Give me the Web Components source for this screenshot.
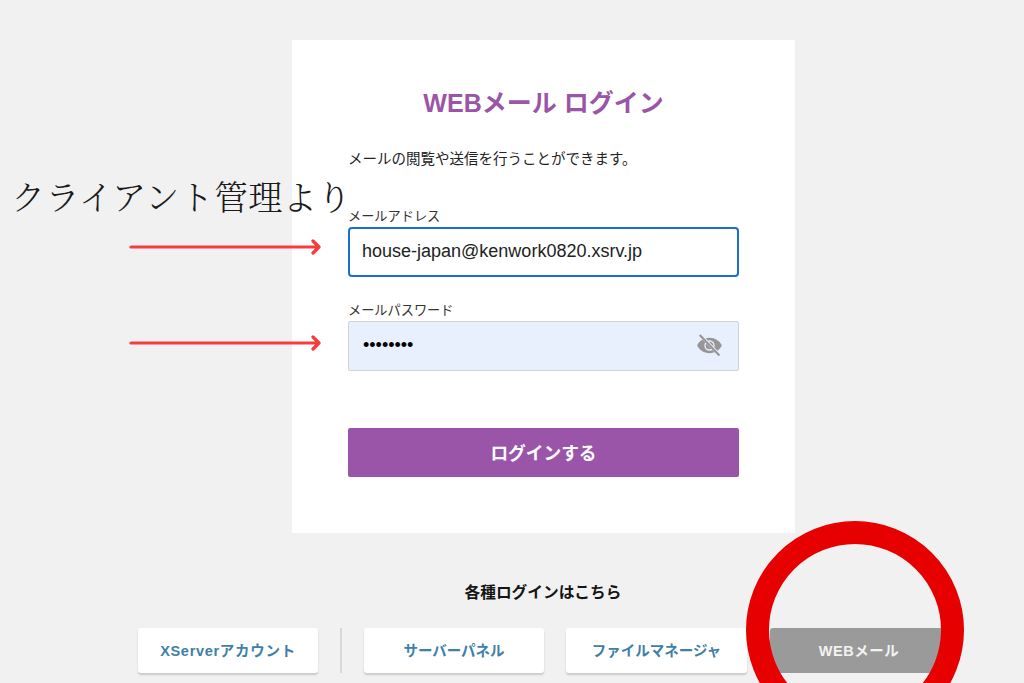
<!DOCTYPE html>
<html lang="ja"><head><meta charset="utf-8"><title>WEBメール ログイン</title>
<style>
html,body{margin:0;padding:0;height:683px;overflow:hidden;background:#f1f1f1}
body{font-family:"Liberation Sans","Noto Sans CJK JP",sans-serif;color:#222}
</style></head><body>
<login-page></login-page>
<template id="t-page"><style>
:host{display:flex;flex-direction:column;align-items:flex-start;width:1024px;height:683px;position:relative;overflow:hidden;padding-top:40px;box-sizing:border-box}
</style><login-card></login-card><login-links></login-links><page-notes></page-notes></template>

<template id="t-card"><style>
:host{display:flex;flex-direction:column;width:503px;height:493px;box-sizing:border-box;background:#fff;padding:48px 56px 0;margin-left:292px}
h1{margin:0;height:30px;line-height:30px;font-size:25px;font-weight:700;color:#9b55a8;text-align:center}
p{margin:31px 0 0;font-size:14.5px;line-height:20px;color:#222;height:20px;white-space:nowrap}
button{margin-top:57px;height:49px;border:0;border-radius:2px;background:#9b55a8;color:#fff;font:700 17.700px "Liberation Sans","Noto Sans CJK JP",sans-serif;padding:0 0 2px}
</style>
<h1>WEBメール ログイン</h1>
<p>メールの閲覧や送信を行うことができます。</p>
<form-field label="メールアドレス" value="house-japan@kenwork0820.xsrv.jp" focused style="margin-top:39px"></form-field>
<form-field label="メールパスワード" value="••••••••" secret style="margin-top:25px"></form-field>
<button>ログインする</button></template>

<template id="t-field"><style>
:host{display:flex;flex-direction:column}
label{font-size:13.200px;line-height:17px;height:17px;color:#333;margin-bottom:2px}
.box{height:50px;box-sizing:border-box;border:1px solid #cfd2d6;border-radius:2px;background:#e8f0fe;display:flex;align-items:center;justify-content:space-between;padding:0 14px 1px 14px;font-size:18px;color:#222}
:host([focused]) .box{background:#fff;border:2px solid #1a6fd0;border-radius:4px;padding-left:12px}
svg{display:none;width:27px;height:27px}
:host([secret]) svg{display:block;margin-right:1px}
:host([secret]) .v{color:#000}
</style><label></label><div class="box"><span class="v"></span>
<svg viewBox="0 0 24 24" fill="#969696"><path d="M12 5.200C7 5.200 2.900 8 1 12c1.900 4 6 6.800 11 6.800S21.100 16 23 12c-1.900-4-6-6.800-11-6.800zm0 11.400a4.600 4.600 0 1 1 0-9.200 4.600 4.600 0 0 1 0 9.200z"/><circle cx="12" cy="12" r="3.400"/><path d="M4.200 3 20.900 20.500" stroke="#e8f0fe" stroke-width="2.800"/><path d="M3.300 2.700 20.800 20.800" stroke="#969696" stroke-width="1.900"/></svg></div></template>

<template id="t-links"><style>
:host{display:flex;flex-direction:column;align-items:center;width:1024px}
h2{margin:49px 0 0;font-size:15.700px;line-height:22px;font-weight:700;color:#151515;margin-left:62px}
.row{display:flex;align-items:stretch;margin-top:24px;padding-left:138px;width:100%;box-sizing:border-box}
i{display:block;width:2px;background:#d8d8d8;margin:0 22px 0 22px;height:45px}
link-btn+link-btn{margin-left:22px}
</style><h2>各種ログインはこちら</h2><div class="row">
<link-btn style="width:180px;letter-spacing:.7px">XServerアカウント</link-btn><i></i>
<link-btn style="width:180px">サーバーパネル</link-btn>
<link-btn style="width:181px">ファイルマネージャ</link-btn>
<link-btn style="width:180px;margin-left:23px;letter-spacing:.5px" active>WEBメール</link-btn></div></template>

<template id="t-btn"><style>
:host{display:flex;align-items:center;justify-content:center;height:45px;box-sizing:border-box;padding-bottom:2px;background:#fff;border-radius:3px;box-shadow:0 2px 2px rgba(0,0,0,.16);color:#3f7fa8;font-size:14.500px;font-weight:700}
:host([active]){background:#9a9a9a;color:#f2f2f2;box-shadow:none;padding-right:2px}
</style><slot></slot></template>

<template id="t-notes"><style>
:host{position:absolute;inset:0;display:block;pointer-events:none}
.cap{position:absolute;left:11px;top:176px;font:300 34.200px/40px "Noto Serif CJK JP","Liberation Serif","Noto Sans CJK JP",serif;color:#1a1a1a;white-space:nowrap;letter-spacing:.2px}
svg{position:absolute;left:0;top:0}
</style><div class="cap">クライアント管理より</div>
<svg width="1024" height="683" fill="none">
<g stroke="#fb3a3a" stroke-width="3.200" stroke-linecap="round" stroke-linejoin="round"><path d="M131 247H318M313 241 319 247 313 253"/><path d="M131 343H318M313 337 319 343 313 349"/></g>
<circle cx="855" cy="630" r="97.500" stroke="#e60000" stroke-width="23"/></svg></template>
<script>
function def(n,t,init){customElements.define(n,class extends HTMLElement{constructor(){super();this.attachShadow({mode:"open"}).appendChild(document.getElementById(t).content.cloneNode(true))}connectedCallback(){init&&init(this)}})}
def("login-card","t-card");
def("form-field","t-field",e=>{const s=e.shadowRoot;s.querySelector("label").textContent=e.getAttribute("label");s.querySelector(".v").textContent=e.getAttribute("value")});
def("login-links","t-links");
def("link-btn","t-btn");
def("page-notes","t-notes");
def("login-page","t-page");
</script></body></html>
